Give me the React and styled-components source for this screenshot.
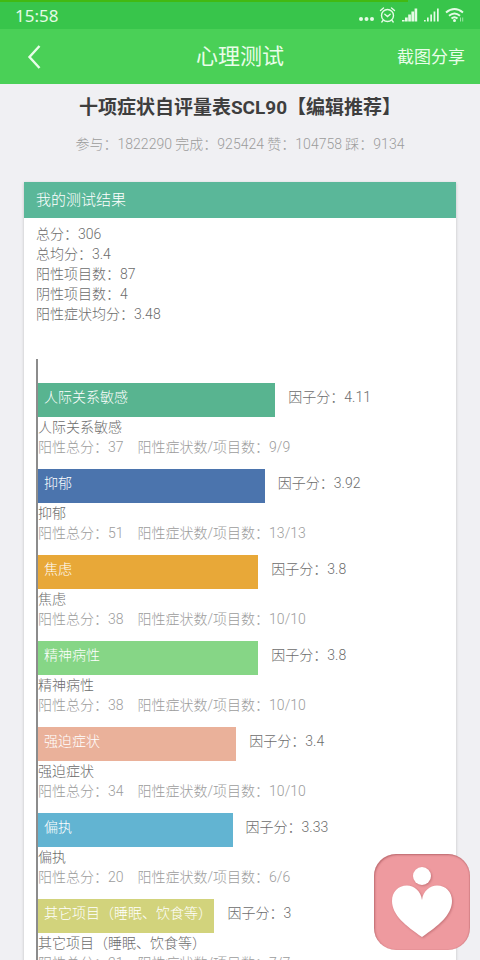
import React from 'react';
import styled, { createGlobalStyle } from 'styled-components';

const GlobalStyle = createGlobalStyle`
  * {
    box-sizing: border-box;
  }

  body {
    margin: 0;
    background: #f0f0f3;
    font-family: Roboto, 'Noto Sans CJK SC', sans-serif;
    font-size: 14px;
    font-weight: 300;
    line-height: 20px;
    color: #6c6c6c;
  }
`;

const Screen = styled.div`
  display: flex;
  flex-direction: column;
  height: 100vh;
  overflow: hidden;
`;

const Progress = styled.div`
  flex: none;
  height: 2px;
  background: linear-gradient(to right, #42b912 85%, #38c54b 85%);
`;

const StatusBar = styled.div`
  display: flex;
  align-items: center;
  justify-content: space-between;
  flex: none;
  height: 27px;
  padding: 0 15px;
  background: #38c54b;
  color: #e4fbe6;
`;

const Clock = styled.time`
  font-family: 'Noto Sans', sans-serif;
  font-size: 17px;
  font-weight: 400;
`;

const StatusIcons = styled.svg`
  display: block;
  width: 107px;
  height: 18px;
`;

const NavBar = styled.header`
  display: grid;
  grid-template-columns: 1fr auto 1fr;
  align-items: center;
  flex: none;
  height: 55px;
  padding: 0 15px;
  background: #4ad057;
  color: #e9fde9;
  font-weight: 400;
`;

const NavButton = styled.button`
  justify-self: ${({ $end }) => ($end ? 'end' : 'start')};
  padding: ${({ $end }) => ($end ? '0' : '0 10px')};
  border: none;
  background: none;
  color: inherit;
  font: inherit;
  font-size: 17px;
  line-height: 24px;
  cursor: pointer;

  svg {
    display: block;
  }
`;

const NavTitle = styled.div`
  font-size: 22px;
  line-height: 30px;
`;

const Content = styled.main`
  flex: 1;
  min-height: 0;
  padding: 10px 24px 0;
  overflow: hidden;
`;

const Title = styled.h1`
  margin: 0;
  font-size: 19px;
  font-weight: 700;
  line-height: 28px;
  text-align: center;
  white-space: nowrap;
  color: #3e3e3e;
`;

const Stats = styled.p`
  margin: 12px 0 28px;
  text-align: center;
  white-space: nowrap;
  color: #9c9c9c;
`;

const Card = styled.section`
  background: #fff;
  box-shadow: 0 1px 3px rgba(0, 0, 0, 0.2);
`;

const CardTitle = styled.h2`
  margin: 0;
  padding: 8px 12px;
  background: #5ab799;
  color: #fff;
  font-size: 15px;
  font-weight: 300;
`;

const Summary = styled.ul`
  margin: 0;
  padding: 6px 12px 35px;
  list-style: none;
`;

const Chart = styled.div`
  margin: 0 12px;
  padding-top: 24px;
  border-left: 2px solid #8c8c8c;
`;

const Factor = styled.div`
  padding-bottom: 12px;
`;

const BarLine = styled.div`
  display: flex;
  gap: 13px;
  line-height: 29px;
  white-space: nowrap;
`;

const Bar = styled.div`
  box-sizing: content-box;
  width: ${({ $score }) => $score * 13.5}%;
  height: 34px;
  padding: 0 6px;
  background: ${({ $color }) => $color};
  color: #fff;
`;

const Detail = styled.div`
  color: #9c9c9c;
  white-space: pre;
`;

const FloatingButton = styled.button`
  position: fixed;
  right: 10px;
  bottom: 10px;
  width: 96px;
  height: 96px;
  padding: 0;
  border: none;
  border-radius: 22px;
  background: #ee9a9f;
  box-shadow: inset 1px 1px 2px rgba(140, 60, 65, 0.5), inset -1px 0 1px rgba(140, 60, 65, 0.2);
  cursor: pointer;

  svg {
    display: block;
    filter: drop-shadow(1px 1px 1px rgba(140, 60, 65, 0.4));
  }
`;

const summary = [
  '总分：306',
  '总均分：3.4',
  '阳性项目数：87',
  '阴性项目数：4',
  '阳性症状均分：3.48',
];

const factors = [
  { name: '人际关系敏感', score: 4.11, total: 37, items: '9/9', color: '#58b490' },
  { name: '抑郁', score: 3.92, total: 51, items: '13/13', color: '#4b74ad' },
  { name: '焦虑', score: 3.8, total: 38, items: '10/10', color: '#e8a838' },
  { name: '精神病性', score: 3.8, total: 38, items: '10/10', color: '#86d686' },
  { name: '强迫症状', score: 3.4, total: 34, items: '10/10', color: '#eab19a' },
  { name: '偏执', score: 3.33, total: 20, items: '6/6', color: '#62b4d2' },
  { name: '其它项目（睡眠、饮食等）', score: 3, total: 21, items: '7/7', color: '#d2d37c' },
];

const PhoneStatus = () => (
  <StatusIcons viewBox="0 0 107 18" fill="currentColor" aria-hidden="true">
    <circle cx="3" cy="12" r="2" />
    <circle cx="8.500" cy="12" r="2" />
    <circle cx="14" cy="12" r="2" />
    <g fill="none" stroke="currentColor" strokeWidth="1.400" strokeLinecap="round">
      <circle cx="29.500" cy="8.500" r="6" />
      <path d="M22.500 3.500l3-2.500M36.500 3.500l-3-2.500M26.800 7.300l2.700 2.200 2.700-2.200M25 13.500l-1.200 1.500M34 13.500l1.200 1.500" />
    </g>
    <path d="M44 14.500v-1.500h2.600v1.500zM47 14.500v-4h2.700v4zM50.200 14.500v-7h2.700v7zM53.400 14.500v-10h2.700v10zM56.600 14.500v-13h2.600v13z" />
    <path d="M66 14.500v-1.500h1.700v1.500zM69 14.500v-4h1.700v4zM72.300 14.500v-7h1.700v7zM75.600 14.500v-10h1.700v10zM79 14.500v-13h1.700v13z" />
    <g fill="none" stroke="currentColor" strokeWidth="2">
      <path d="M88 5.500q8.500-7 17 0" />
      <path d="M91 8.700q5.500-4.500 11 0" />
      <path d="M93.500 11.500q3-2.500 6 0" />
    </g>
    <circle cx="96.500" cy="13.500" r="1.500" />
    <path d="M102 10.500h1v4h-1zM104.200 10.500h1v4h-1z" opacity="0.6" />
  </StatusIcons>
);

const FactorRow = ({ name, score, total, items, color }) => (
  <Factor>
    <BarLine>
      <Bar $score={score} $color={color}>{name}</Bar>
      <span>因子分：{score}</span>
    </BarLine>
    <div>{name}</div>
    <Detail>{`阳性总分：${total}\u3000阳性症状数/项目数：${items}`}</Detail>
  </Factor>
);

const App = () => {
  return (
    <Screen>
      <GlobalStyle />
      <Progress />
      <StatusBar>
        <Clock>15:58</Clock>
        <PhoneStatus />
      </StatusBar>

      <NavBar>
        <NavButton aria-label="返回">
          <svg width="18" height="26" viewBox="0 0 18 26" fill="none" stroke="currentColor" strokeWidth="2.400">
            <path d="M14.500 2L4.500 13l10 11" />
          </svg>
        </NavButton>
        <NavTitle>心理测试</NavTitle>
        <NavButton $end>截图分享</NavButton>
      </NavBar>

      <Content>
        <Title>十项症状自评量表SCL90【编辑推荐】</Title>
        <Stats>参与：1822290 完成：925424 赞：104758 踩：9134</Stats>

        <Card>
          <CardTitle>我的测试结果</CardTitle>
          <Summary>
            {summary.map((line) => (
              <li key={line}>{line}</li>
            ))}
          </Summary>
          <Chart>
            {factors.map((factor) => (
              <FactorRow key={factor.name} {...factor} />
            ))}
          </Chart>
        </Card>
      </Content>

      <FloatingButton aria-label="心理">
        <svg width="96" height="96" viewBox="0 0 96 96" fill="#fff">
          <circle cx="48" cy="22" r="9" />
          <path d="M48 46C47 37 40 31.500 33 31.500C24 31.500 18 38 18 47C18 61 32 72 48 83C64 72 78 61 78 47C78 38 72 31.500 63 31.500C56 31.500 49 37 48 46Z" />
        </svg>
      </FloatingButton>
    </Screen>
  );
};

export default App;
